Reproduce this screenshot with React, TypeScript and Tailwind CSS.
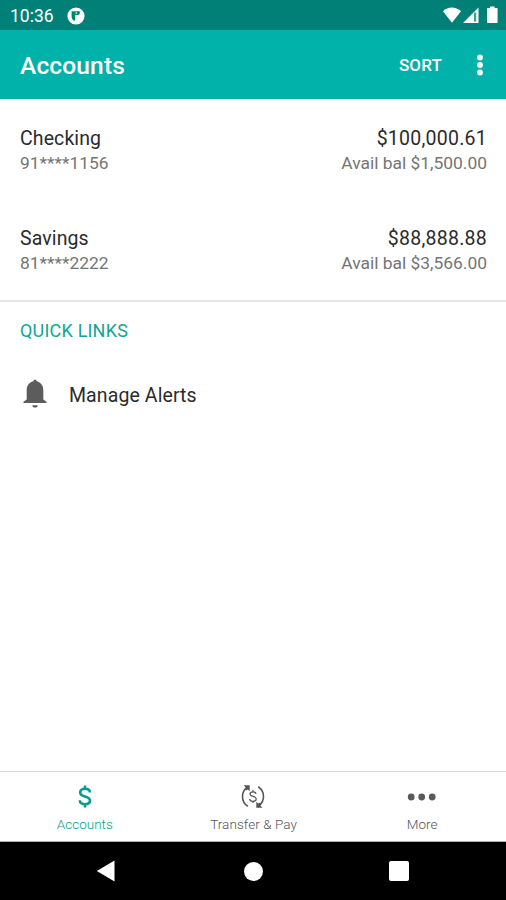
import React from "react";

const accounts = [
  { name: "Checking", number: "91****1156", balance: "$100,000.61", available: "Avail bal $1,500.00" },
  { name: "Savings", number: "81****2222", balance: "$88,888.88", available: "Avail bal $3,566.00" },
];

function StatusBar() {
  return (
    <div className="flex h-[30px] items-center bg-[#018078] pl-[10px] pr-[7px] text-white">
      <span className="pt-[2px] text-[17.5px] leading-[28px]">10:36</span>
      <svg className="ml-[13px] mt-px" width="18" height="18" viewBox="0 0 18 18">
        <circle cx="9" cy="9" r="8.6" fill="#fff" />
        <path d="M4.600 4.200h3.600v9.200H6.400Q4.600 12 4.600 10z" fill="#018078" />
        <path d="M8.200 4.200h4.600V6a2 2 0 0 1-2 2H8.200z" fill="#018078" />
        <circle cx="9.400" cy="6" r=".8" fill="#fff" />
      </svg>
      <svg className="ml-auto" width="58" height="20" viewBox="0 0 58 20">
        <path d="M2 6.300Q6 2.600 10.800 2.600T20 6.300L10.900 17.800z" fill="#fff" />
        <path d="M37.500 2.500V18H22z" fill="#fff" />
        <path d="M33 7.600h2.200v9H33z" fill="#3d9c96" />
        <path d="M46.800 3H49V1.600h4.600V3h2.200q.8 0 .8.8v13.400q0 .8-.8.8h-9q-.8 0-.8-.8V3.800q0-.8.8-.8z" fill="#fff" />
      </svg>
    </div>
  );
}

function AppBar() {
  return (
    <header className="flex h-[69px] items-center bg-[#01b2aa] pl-5 pr-[22px] text-white">
      <h1 className="pt-[3px] text-[24.5px] font-medium leading-7 tracking-[0.15px]">Accounts</h1>
      <button className="ml-auto text-[17px] font-medium leading-5 tracking-[0.15px]">SORT</button>
      <svg className="ml-[34px]" width="8" height="22" viewBox="0 0 8 22">
        <circle cx="4" cy="3.500" r="2.900" fill="#fff" />
        <circle cx="4" cy="11" r="2.900" fill="#fff" />
        <circle cx="4" cy="18.500" r="2.900" fill="#fff" />
      </svg>
    </header>
  );
}

function BottomNav() {
  return (
    <nav className="grid h-[71px] grid-cols-3 border-b border-t border-b-[#b0b0b0] border-t-[#d9d9d9] text-[13.5px] font-light leading-4 text-[#555]">
      <div className="flex flex-col items-center pl-px pt-[12px] text-[#049c8c]">
        <svg width="28" height="25" viewBox="0 0 28 25" fill="none" stroke="#049c8c" strokeWidth="2.600">
          <path d="M19 8.500C19 5.900 17 4.700 14 4.700s-4.800 1.400-4.800 3.700c0 2.500 2.200 3.300 4.800 4 2.700.7 5 1.500 5 4.200 0 2.300-2 3.700-5 3.700s-5.200-1.300-5.200-4M14 1.500v3.200M14 20.300v3.200" />
        </svg>
        <span className="mt-[7px]">Accounts</span>
      </div>
      <div className="flex flex-col items-center pl-px pt-[12px]">
        <svg width="26" height="25" viewBox="0 0 26 25" fill="none" stroke="#555" strokeWidth="1.600">
          <path d="M7.800 22.300C4.500 20.300 2.500 17 2.500 12.500c0-4 1.600-7 4.700-9.500" />
          <path d="M18.200 2.700c3.300 2 5.300 5.300 5.300 9.800 0 4-1.600 7-4.700 9.500" />
          <path fill="#555" stroke="none" d="M3.700 1.300h6v6L7.900 5.500 6 6.500 5 5l.8-1.300zM22.300 23.700h-6v-6l1.800 1.800 1.900-1 1 1.500-.8 1.300z" />
          <path strokeWidth="1.200" d="M16 9.900c-.2-1.500-1.300-2.100-3-2.100s-3 .8-3 2.200 1.300 2 3 2.400 3.200 1 3.200 2.600-1.300 2.300-3.200 2.300-3.300-.8-3.400-2.300M13 6v1.800M13 17.300V19" />
        </svg>
        <span className="mt-[7px] tracking-[0.06px]">Transfer &amp; Pay</span>
      </div>
      <div className="flex flex-col items-center pl-px pt-[12px]">
        <svg width="30" height="25" viewBox="0 0 30 25" fill="#5a5a5a">
          <circle cx="4.200" cy="13" r="3.400" />
          <circle cx="14.700" cy="13" r="3.400" />
          <circle cx="25.200" cy="13" r="3.400" />
        </svg>
        <span className="mt-[7px]">More</span>
      </div>
    </nav>
  );
}

function SystemNav() {
  return (
    <div className="flex h-[58px] items-center bg-black pl-[96px] pr-[97px]">
      <div className="flex w-full items-center justify-between">
        <svg width="20" height="22" viewBox="0 0 20 22">
          <path d="M18.500.500v21L.800 11z" fill="#fff" />
        </svg>
        <div className="ml-[2px] size-[19px] rounded-full bg-white" />
        <div className="size-[20px] rounded-[2px] bg-white" />
      </div>
    </div>
  );
}

export default function App() {
  return (
    <div className="flex h-[900px] w-[506px] flex-col overflow-hidden bg-white font-[Roboto,sans-serif]">
      <StatusBar />
      <AppBar />
      <main className="flex-1">
        <section className="flex h-[203px] flex-col gap-[50px] border-b-2 border-[#e6e6e6] pl-5 pr-[19px] pt-[27px]">
          {accounts.map((a) => (
            <div key={a.name} className="flex h-[50px] justify-between">
              <div>
                <div className="text-[19.5px] leading-[25px] tracking-[0.1px] text-[#2b2b2b]">{a.name}</div>
                <div className="text-[17.4px] leading-[25px] text-[#747474]">{a.number}</div>
              </div>
              <div className="text-right">
                <div className="text-[19.5px] leading-[25px] tracking-[0.25px] text-[#2b2b2b]">{a.balance}</div>
                <div className="text-[17.4px] leading-[25px] text-[#747474]">{a.available}</div>
              </div>
            </div>
          ))}
        </section>
        <section className="pt-[17px]">
          <h2 className="pl-5 text-[18px] font-normal leading-6 tracking-[0.2px] text-[#12a596]">QUICK LINKS</h2>
          <div className="mt-[36px] flex items-center pl-[23px]">
            <svg width="24" height="29" viewBox="0 0 24 29" fill="#5c5c5c">
              <path d="M12 .500Q10.800 .500 10.200 2.300C6 3.800 3.700 6.500 3.700 11.500v9L.500 22.700V24h23v-1.300L20.300 20.500v-9c0-5-2.300-7.700-6.500-9.200Q13.200.500 12 .500z" />
              <path d="M9.300 26.200h5.400a2.700 2.400 0 0 1-5.400 0z" />
            </svg>
            <span className="ml-[22px] mt-[5px] text-[19.5px] leading-6 tracking-[0.1px] text-[#2b2b2b]">Manage Alerts</span>
          </div>
        </section>
      </main>
      <BottomNav />
      <SystemNav />
    </div>
  );
}
